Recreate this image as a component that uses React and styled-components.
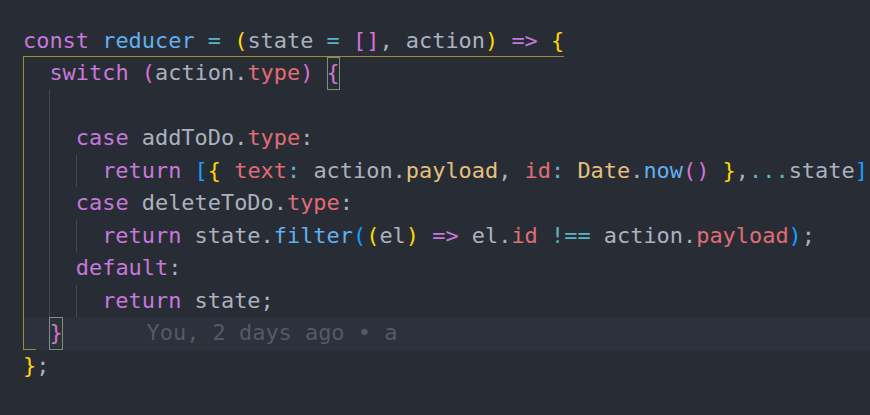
import React from 'react';
import styled, { createGlobalStyle } from 'styled-components';

const C = {
  kw: '#c678dd',
  fn: '#61afef',
  op: '#56b6c2',
  txt: '#abb2bf',
  prop: '#e06c75',
  cls: '#e5c07b',
  b1: '#ffd700',
  b2: '#da70d6',
  b3: '#179fff',
};

const GOLD = '#9d8a35';
const GREY = '#454a52';

const GlobalStyle = createGlobalStyle`
  html, body {
    margin: 0;
    background: #282c34;
  }
  body {
    height: 415px;
    overflow: hidden;
  }
`;

const Editor = styled.div`
  padding-top: 24.5px;
  font-family: 'DejaVu Sans Mono', monospace;
  font-size: 21.93px;
  color: ${C.txt};
  overflow: hidden;
`;

const Line = styled.div`
  height: 32.5px;
  line-height: 32.5px;
  margin-left: 23px;
  white-space: pre;
  background: ${(p) => (p.$active ? '#2c313c' : 'transparent')};
`;

const Guide = styled.span`
  position: relative;
  display: inline-block;
  vertical-align: top;
  width: 2ch;
  height: 100%;
  box-sizing: border-box;
  border-left: 1px solid ${(p) => p.$color || 'transparent'};

  &::after {
    content: '';
    display: ${(p) => (p.$corner ? 'block' : 'none')};
    position: absolute;
    left: -1px;
    bottom: 0;
    width: 13px;
    height: 1px;
    background: ${(p) => p.$color};
  }
`;

const Underlined = styled.span`
  display: inline-block;
  vertical-align: top;
  height: 100%;
  box-sizing: border-box;
  border-bottom: 1px solid ${GOLD};
`;

const T = styled.span`
  color: ${(p) => p.$c || C.txt};
`;

const Match = styled.span`
  display: inline-block;
  vertical-align: top;
  height: 100%;
  box-sizing: border-box;
  color: ${(p) => p.$c};
  background: rgba(0, 100, 0, 0.1);
  box-shadow: inset 0 0 0 1px #888;
`;

const Blame = styled.span`
  margin-left: 84px;
  color: #555a64;
`;

const Indent = ({ depth, corner }) => {
  const colors = [GOLD, GREY, GREY];
  const units = [];
  for (let i = 0; i < depth; i++) {
    units.push(<Guide key={i} $color={colors[i]} $corner={corner && i === 0} />);
  }
  return units;
};

export default function App() {
  return (
    <>
      <GlobalStyle />
      <Editor>
        <Line>
          <Underlined>
            <T $c={C.kw}>const</T> <T $c={C.fn}>reducer</T> <T $c={C.op}>=</T>{' '}
            <T $c={C.b1}>(</T>state <T $c={C.op}>=</T> <T $c={C.b2}>[]</T>, action
            <T $c={C.b1}>)</T> <T $c={C.kw}>=&gt;</T> <T $c={C.b1}>{'{'}</T>
          </Underlined>
        </Line>
        <Line>
          <Indent depth={1} />
          <T $c={C.kw}>switch</T> <T $c={C.b2}>(</T>action.<T $c={C.prop}>type</T>
          <T $c={C.b2}>)</T> <Match $c={C.b2}>{'{'}</Match>
        </Line>
        <Line>
          <Indent depth={2} />
        </Line>
        <Line>
          <Indent depth={2} />
          <T $c={C.kw}>case</T> addToDo.<T $c={C.prop}>type</T>:
        </Line>
        <Line>
          <Indent depth={3} />
          <T $c={C.kw}>return</T> <T $c={C.b3}>[</T>
          <T $c={C.b1}>{'{'}</T> <T $c={C.prop}>text</T>
          <T $c={C.op}>:</T> action.<T $c={C.cls}>payload</T>, <T $c={C.prop}>id</T>
          <T $c={C.op}>:</T> <T $c={C.cls}>Date</T>.<T $c={C.fn}>now</T>
          <T $c={C.b2}>()</T> <T $c={C.b1}>{'}'}</T>,<T $c={C.op}>...</T>state
          <T $c={C.b3}>]</T>;
        </Line>
        <Line>
          <Indent depth={2} />
          <T $c={C.kw}>case</T> deleteToDo.<T $c={C.prop}>type</T>:
        </Line>
        <Line>
          <Indent depth={3} />
          <T $c={C.kw}>return</T> state.<T $c={C.fn}>filter</T>
          <T $c={C.b3}>(</T>
          <T $c={C.b1}>(</T>el<T $c={C.b1}>)</T> <T $c={C.kw}>=&gt;</T> el.
          <T $c={C.prop}>id</T> <T $c={C.op}>!==</T> action.
          <T $c={C.prop}>payload</T>
          <T $c={C.b3}>)</T>;
        </Line>
        <Line>
          <Indent depth={2} />
          <T $c={C.kw}>default</T>:
        </Line>
        <Line>
          <Indent depth={3} />
          <T $c={C.kw}>return</T> state;
        </Line>
        <Line $active>
          <Indent depth={1} corner />
          <Match $c={C.b2}>{'}'}</Match>
          <Blame>You, 2 days ago • a</Blame>
        </Line>
        <Line>
          <T $c={C.b1}>{'}'}</T>;
        </Line>
      </Editor>
    </>
  );
}
